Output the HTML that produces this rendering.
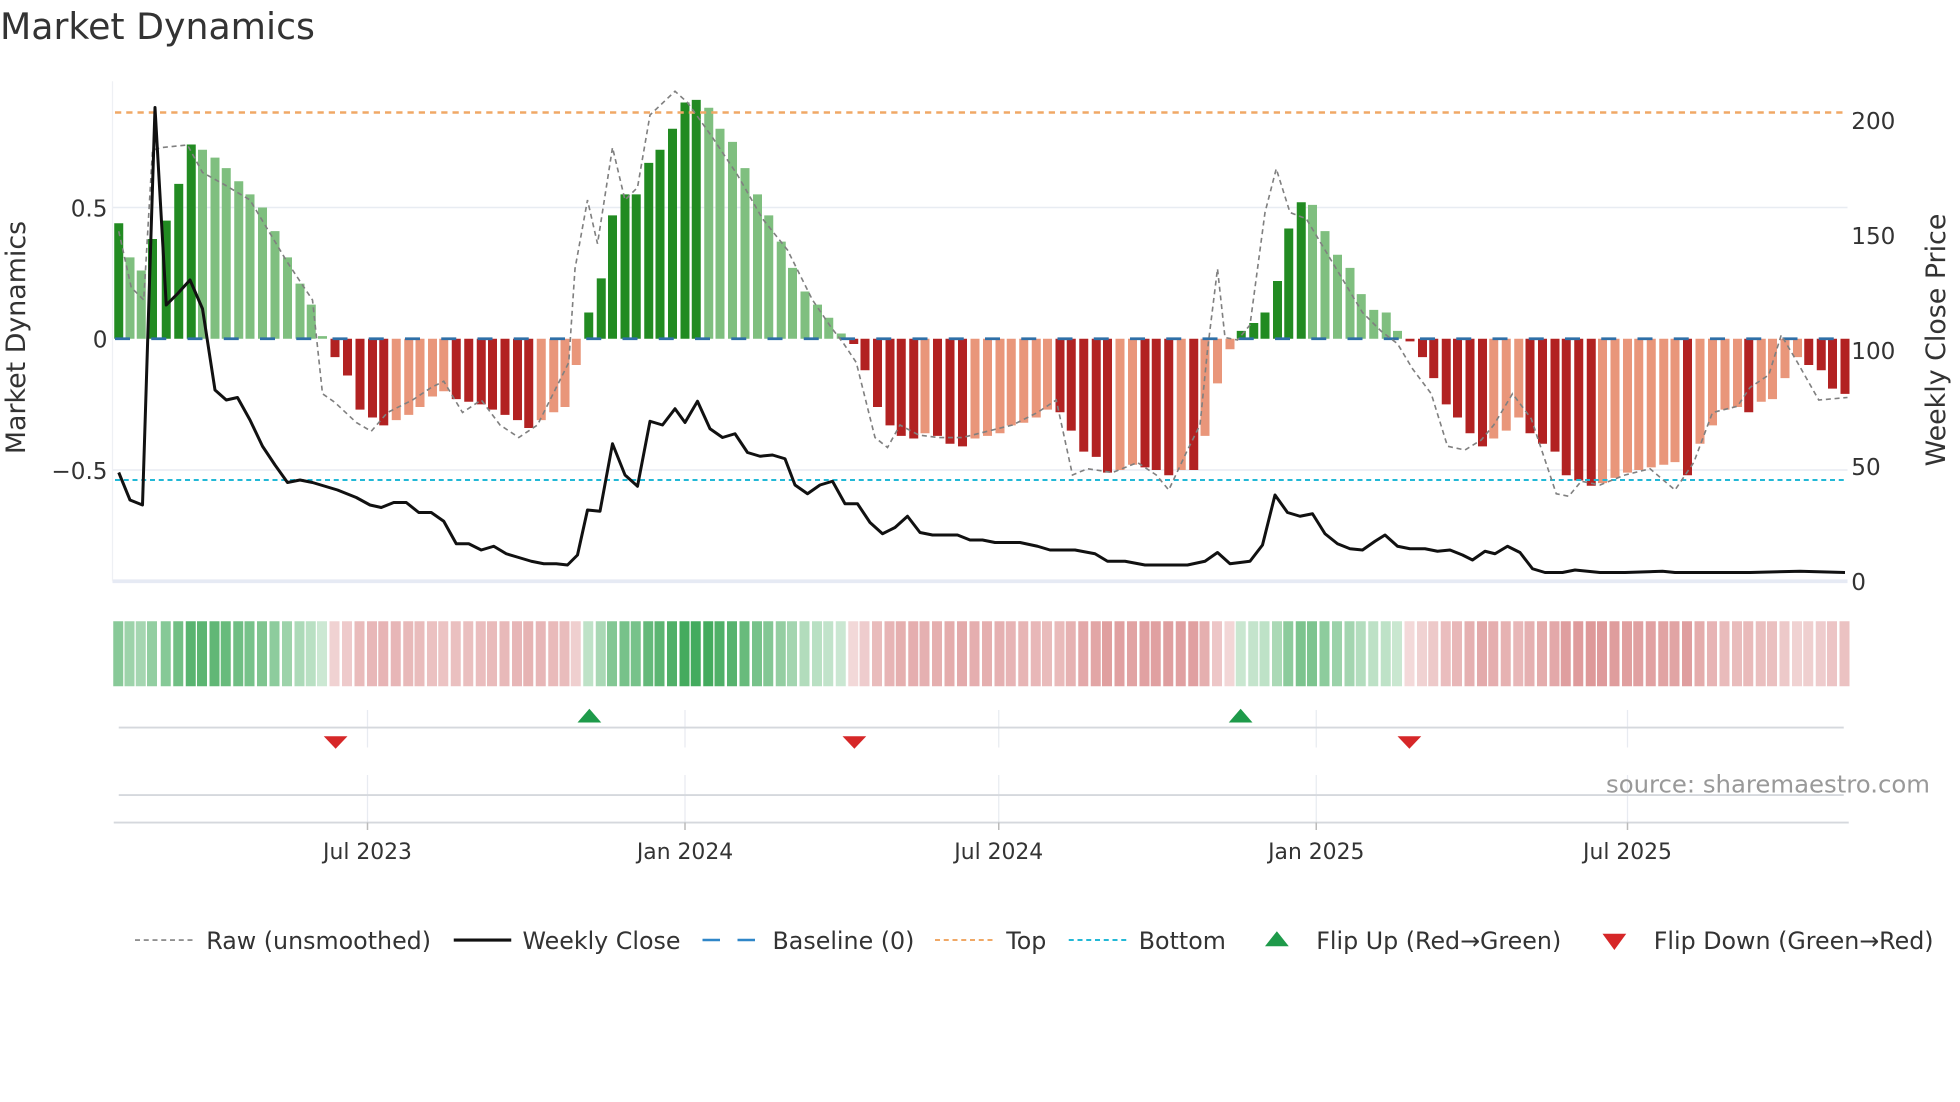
<!DOCTYPE html>
<html><head><meta charset="utf-8"><style>
html,body{margin:0;padding:0;background:#fff;width:1960px;height:1102px;overflow:hidden}
svg{display:block}
text{font-family:"DejaVu Sans","Liberation Sans",sans-serif;fill:#333}
</style></head><body>
<svg id="s" width="1960" height="1102" viewBox="0 0 1568 881.6" xmlns="http://www.w3.org/2000/svg">
<text x="0" y="31" font-size="29">Market Dynamics</text>
<line x1="90" y1="166" x2="1478" y2="166" stroke="#e8ecf2" stroke-width="1.2"/>
<line x1="90" y1="376" x2="1478" y2="376" stroke="#e8ecf2" stroke-width="1.2"/>
<line x1="90" y1="465" x2="1478" y2="465" stroke="#e6eaf4" stroke-width="3"/>
<line x1="90" y1="65" x2="90" y2="465" stroke="#eef0f4" stroke-width="1"/>
<g id="bars"></g>
<line x1="92" y1="90" x2="1478" y2="90" stroke="#f0a866" stroke-width="2" stroke-dasharray="5,4"/>
<line x1="92" y1="384" x2="1478" y2="384" stroke="#22b8d6" stroke-width="1.6" stroke-dasharray="4,3"/>
<line x1="92" y1="271" x2="1478" y2="271" stroke="#2f6fa7" stroke-width="2.2" stroke-dasharray="12,17"/>
<polyline id="raw" fill="none" stroke="#808080" stroke-width="1.3" stroke-dasharray="4,3"/>
<polyline id="close" fill="none" stroke="#111" stroke-width="2.4" stroke-linejoin="round"/>
<g font-size="18.5">
<text x="86" y="173" text-anchor="end">0.5</text>
<text x="86" y="278" text-anchor="end">0</text>
<text x="86" y="383" text-anchor="end">−0.5</text>
<text x="1481" y="103">200</text>
<text x="1481" y="195">150</text>
<text x="1481" y="287">100</text>
<text x="1481" y="380">50</text>
<text x="1481" y="472">0</text>
</g>
<text font-size="21.5" transform="translate(20,270) rotate(-90)" text-anchor="middle">Market Dynamics</text>
<text font-size="21.5" transform="translate(1556,272) rotate(-90)" text-anchor="middle">Weekly Close Price</text>
<g id="heat"></g>
<g stroke="#e8ebf1" stroke-width="1">
<line x1="294" y1="568" x2="294" y2="598"/><line x1="548" y1="568" x2="548" y2="598"/><line x1="799" y1="568" x2="799" y2="598"/><line x1="1053" y1="568" x2="1053" y2="598"/><line x1="1302" y1="568" x2="1302" y2="598"/>
<line x1="294" y1="620" x2="294" y2="658"/><line x1="548" y1="620" x2="548" y2="658"/><line x1="799" y1="620" x2="799" y2="658"/><line x1="1053" y1="620" x2="1053" y2="658"/><line x1="1302" y1="620" x2="1302" y2="658"/>
</g>
<line x1="95" y1="582" x2="1475" y2="582" stroke="#d5d8dd" stroke-width="1.5"/>
<line x1="95" y1="636" x2="1475" y2="636" stroke="#d5d8dd" stroke-width="1.5"/>
<line x1="91" y1="658" x2="1479" y2="658" stroke="#d5d8dd" stroke-width="1.5"/>
<g stroke="#bbb" stroke-width="1.2">
<line x1="294" y1="658" x2="294" y2="664"/><line x1="548" y1="658" x2="548" y2="664"/><line x1="799" y1="658" x2="799" y2="664"/><line x1="1053" y1="658" x2="1053" y2="664"/><line x1="1302" y1="658" x2="1302" y2="664"/>
</g>
<g fill="#1e9a4a"><polygon points="462,578 481,578 471.5,567"/><polygon points="983,578 1002,578 992.5,567"/></g>
<g fill="#d62728"><polygon points="259,589 278,589 268.5,599"/><polygon points="674,589 693,589 683.5,599"/><polygon points="1118,589 1137,589 1127.5,599"/></g>
<text x="1544" y="634" font-size="19.5" text-anchor="end" style="fill:#999">source: sharemaestro.com</text>
<g font-size="17.5" text-anchor="middle">
<text x="294" y="687">Jul 2023</text><text x="548" y="687">Jan 2024</text><text x="799" y="687">Jul 2024</text><text x="1053" y="687">Jan 2025</text><text x="1302" y="687">Jul 2025</text>
</g>
<g font-size="19">
<line x1="108" y1="752" x2="154" y2="752" stroke="#808080" stroke-width="1.3" stroke-dasharray="4,3"/>
<text x="165" y="759">Raw (unsmoothed)</text>
<line x1="363" y1="752" x2="409" y2="752" stroke="#111" stroke-width="2.5"/>
<text x="418" y="759">Weekly Close</text>
<line x1="562" y1="752" x2="608" y2="752" stroke="#2f86c8" stroke-width="2" stroke-dasharray="14,14"/>
<text x="618" y="759">Baseline (0)</text>
<line x1="748" y1="752" x2="794" y2="752" stroke="#f0a866" stroke-width="1.6" stroke-dasharray="4,3"/>
<text x="805" y="759">Top</text>
<line x1="855" y1="752" x2="901" y2="752" stroke="#22b8d6" stroke-width="1.6" stroke-dasharray="4,3"/>
<text x="911" y="759">Bottom</text>
<polygon points="1012,757 1031,757 1021.5,745" fill="#1e9a4a"/>
<text x="1053" y="759">Flip Up (Red→Green)</text>
<polygon points="1282,747 1301,747 1291.5,760" fill="#d62728"/>
<text x="1323" y="759">Flip Down (Green→Red)</text>
</g>
</svg>
<script>
var NS="http://www.w3.org/2000/svg";
var K=[[95,.44],[104,.31],[113,.26],[122,.38],[133,.45],[143,.59],[153,.74],[162,.72],[172,.69],[181,.65],[191,.6],[200,.55],[210,.5],[220,.41],[230,.31],[240,.21],[249,.13],[258,.01],[268,-.07],[278,-.14],[288,-.27],[298,-.3],[307,-.33],[317,-.31],[327,-.29],[336,-.26],[346,-.22],[355,-.2],[365,-.23],[375,-.24],[385,-.25],[394,-.27],[404,-.29],[414,-.31],[423,-.34],[433,-.31],[443,-.28],[452,-.26],[461,-.1],[471,.1],[481,.23],[490,.47],[500,.55],[509,.55],[519,.67],[528,.72],[538,.8],[548,.9],[557,.91],[567,.88],[576,.8],[586,.75],[596,.65],[606,.55],[615,.47],[625,.37],[634,.27],[644,.18],[654,.13],[663,.08],[673,.02],[683,-.02],[692,-.12],[702,-.26],[712,-.33],[721,-.37],[731,-.38],[740,-.36],[750,-.37],[760,-.4],[770,-.41],[780,-.38],[790,-.37],[800,-.36],[809,-.33],[819,-.32],[829,-.3],[838,-.27],[848,-.28],[857,-.35],[867,-.43],[877,-.45],[886,-.51],[896,-.5],[906,-.48],[916,-.49],[925,-.5],[935,-.52],[945,-.5],[955,-.5],[964,-.37],[974,-.17],[984,-.04],[993,.03],[1003,.06],[1012,.1],[1022,.22],[1031,.42],[1041,.52],[1050,.51],[1060,.41],[1070,.32],[1080,.27],[1089,.17],[1099,.11],[1109,.1],[1118,.03],[1128,-.01],[1138,-.07],[1147,-.15],[1157,-.25],[1166,-.3],[1176,-.36],[1186,-.41],[1195,-.38],[1205,-.35],[1215,-.3],[1224,-.36],[1234,-.4],[1244,-.43],[1253,-.52],[1263,-.54],[1273,-.56],[1282,-.55],[1292,-.53],[1302,-.51],[1311,-.5],[1321,-.49],[1331,-.48],[1340,-.47],[1350,-.52],[1360,-.4],[1370,-.33],[1380,-.27],[1390,-.26],[1399,-.28],[1409,-.24],[1418,-.23],[1428,-.15],[1438,-.07],[1447,-.1],[1457,-.12],[1466,-.19],[1476,-.21]];
var bars=document.getElementById("bars"),heat=document.getElementById("heat");
for(var i=0;i<K.length;i++){
 var x=K[i][0],v=K[i][1],p=i>0?K[i-1][1]:v;
 var r=document.createElementNS(NS,"rect");
 var h=Math.abs(v)*210,y=v>=0?271-h:271;
 r.setAttribute("x",x-3.6);r.setAttribute("width",7.2);r.setAttribute("y",y);r.setAttribute("height",Math.max(h,1.5));
 var c;
 if(v>=0)c=(v>=p)?"#228b22":"#7fbf7f";else c=(v<=p)?"#b22222":"#e9967a";
 r.setAttribute("fill",c);bars.appendChild(r);
 var q=document.createElementNS(NS,"rect");
 q.setAttribute("x",x-4.4);q.setAttribute("width",8);q.setAttribute("y",497);q.setAttribute("height",52);
 var a=0.25+Math.min(Math.abs(v),0.9)*0.8;
 q.setAttribute("fill",v>=0?"#3aa655":"#c9595a");q.setAttribute("fill-opacity",Math.min(a,0.95)*(v>=0?1:0.88));
 heat.appendChild(q);
}
document.getElementById("close").setAttribute("points","95,378 104,400 114,404 124,86 133,244 142,235 152,224 162,247 172,312 181,320 190,318 200,336 210,357 220,372 230,386 240,384 250,386 260,389 270,392 285,398 296,404 305,406 315,402 325,402 335,410 345,410 355,417 365,435 375,435 385,440 395,437 405,443 415,446 425,449 435,451 445,451 454,452 462,444 470,408 480,409 490,355 500,380 510,389 520,337 530,340 540,327 548,338 558,321 568,343 578,350 588,347 598,362 608,365 618,364 628,367 636,388 646,395 656,388 666,385 676,403 686,403 696,418 706,427 716,422 726,413 736,426 746,428 756,428 766,428 776,432 786,432 796,434 806,434 816,434 830,437 840,440 860,440 876,443 886,449 900,449 916,452 930,452 950,452 964,449 974,442 984,451 1000,449 1010,436 1020,396 1030,410 1040,413 1050,411 1060,427 1070,435 1080,439 1090,440 1100,433 1108,428 1118,437 1128,439 1140,439 1150,441 1160,440 1170,444 1178,448 1188,441 1196,443 1206,437 1216,442 1226,455 1236,458 1250,458 1260,456 1280,458 1300,458 1330,457 1340,458 1400,458 1440,457 1476,458");
document.getElementById("raw").setAttribute("points","95,185 105,230 115,240 122,120 130,118 150,116 162,138 180,148 200,160 215,185 230,210 250,240 258,315 268,322 285,338 297,345 310,330 330,320 345,310 355,305 370,330 385,320 400,340 415,350 430,340 445,310 455,290 460,215 470,160 478,195 490,118 500,160 510,150 520,92 540,73 550,82 570,110 590,140 610,175 630,200 650,240 665,262 675,275 685,290 700,350 710,358 720,340 735,348 750,350 770,350 790,345 810,340 830,330 845,320 858,380 870,375 890,378 910,370 925,380 935,392 950,360 960,340 966,280 974,215 980,270 990,272 1000,260 1012,170 1021,135 1032,170 1045,175 1060,200 1075,225 1090,250 1105,265 1118,275 1130,295 1145,315 1158,357 1172,360 1185,352 1195,340 1210,315 1225,335 1235,365 1245,395 1255,397 1265,385 1280,388 1300,380 1320,375 1340,392 1355,370 1370,330 1390,325 1400,310 1415,300 1425,268 1438,290 1455,320 1478,318");
</script>
</body></html>
